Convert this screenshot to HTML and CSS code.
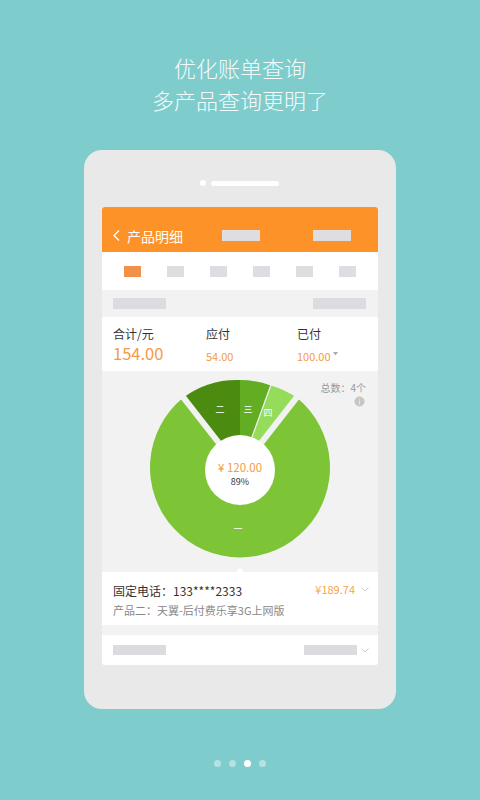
FILE: index.html
```html
<!DOCTYPE html>
<html lang="zh">
<head>
<meta charset="utf-8">
<link rel="stylesheet" href="styles.css">
</head>
<body>
<div class="page">
  <div class="title">
    <div>优化账单查询</div>
    <div>多产品查询更明了</div>
  </div>
  <div class="phone">
    <div class="speaker"><span class="cam"></span><span class="slot"></span></div>
    <div class="screen">
      <div class="header">
        <svg class="back" width="7" height="11" viewBox="0 0 7 11"><polyline points="6,0.5 1,5.5 6,10.5" fill="none" stroke="#fff" stroke-width="1.3"/></svg>
        <span class="htitle">产品明细</span>
        <span class="hbar hbar1"></span>
        <span class="hbar hbar2"></span>
      </div>
      <div class="tabs">
        <div class="tab"><span class="sq active"></span></div>
        <div class="tab"><span class="sq"></span></div>
        <div class="tab"><span class="sq"></span></div>
        <div class="tab"><span class="sq"></span></div>
        <div class="tab"><span class="sq"></span></div>
        <div class="tab"><span class="sq"></span></div>
      </div>
      <div class="grayrow">
        <span class="gbar"></span>
        <span class="gbar"></span>
      </div>
      <div class="totals">
        <div class="col">
          <div class="lbl">合计/元</div>
          <div class="val big">154.00</div>
        </div>
        <div class="col">
          <div class="lbl">应付</div>
          <div class="val">54.00</div>
        </div>
        <div class="col">
          <div class="lbl">已付</div>
          <div class="val">100.00<svg class="caret" width="5" height="4" viewBox="0 0 5 4"><polygon points="0,0 5,0 2.5,3.5" fill="#aaa"/></svg></div>
        </div>
      </div>
      <div class="chart">
        <svg class="pie" width="276" height="201" viewBox="0 0 276 201">
          <path d="M138,99 L194.64,26.5 A90,90 0 1 1 81.36,26.5 Z" fill="#7dc536"/>
          <path d="M138,99 L81.36,26.5 A90,90 0 0 1 138,9 Z" fill="#4b8c10"/>
          <path d="M138,99 L138,9 A90,90 0 0 1 168.78,14.43 Z" fill="#62ad22"/>
          <path d="M138,99 L168.78,14.43 A90,90 0 0 1 194.64,26.5 Z" fill="#95dc5b"/>
          <line x1="138" y1="99" x2="195.9" y2="24.9" stroke="#f2f2f2" stroke-width="6"/>
          <line x1="138" y1="99" x2="80.1" y2="24.9" stroke="#f2f2f2" stroke-width="6"/>
          <line x1="138" y1="99" x2="169.1" y2="13.5" stroke="#f2f2f2" stroke-width="1.2"/>
          <circle cx="138" cy="99" r="35" fill="#fff"/>
          <text x="118" y="42" class="seg">二</text>
          <text x="146" y="42" class="seg">三</text>
          <text x="166" y="45" class="seg">四</text>
          <text x="136" y="161" class="seg">一</text>
          <text x="138" y="101" class="amt" text-anchor="middle">¥ 120.00</text>
          <text x="138" y="114" class="pct" text-anchor="middle">89%</text>
          <polygon points="134.5,201 138,196.5 141.5,201" fill="#fff"/>
        </svg>
        <div class="count">总数：4个</div>
        <svg class="info" width="11" height="11" viewBox="0 0 11 11"><circle cx="5.5" cy="5.5" r="5" fill="#c6c6c6"/><rect x="5" y="4.5" width="1" height="4" fill="#e6e6e6"/><rect x="5" y="2.5" width="1" height="1" fill="#e6e6e6"/></svg>
      </div>
      <div class="detail">
        <div class="dline1">
          <span class="phone-no">固定电话：133****2333</span>
          <span class="price">¥189.74<svg class="chev" width="8" height="5" viewBox="0 0 8 5"><polyline points="0.5,0.5 4,4 7.5,0.5" fill="none" stroke="#ccc" stroke-width="1"/></svg></span>
        </div>
        <div class="dline2">产品二：天翼-后付费乐享3G上网版</div>
      </div>
      <div class="gap"></div>
      <div class="lastrow">
        <span class="gbar"></span>
        <span class="rgt"><span class="gbar"></span><svg class="chev" width="8" height="5" viewBox="0 0 8 5"><polyline points="0.5,0.5 4,4 7.5,0.5" fill="none" stroke="#ccc" stroke-width="1"/></svg></span>
      </div>
    </div>
  </div>
  <div class="dots">
    <span class="dot"></span><span class="dot"></span><span class="dot on"></span><span class="dot"></span>
  </div>
</div>
</body>
</html>
```
FILE: styles.css
```css
* { box-sizing: border-box; }
html, body { margin: 0; padding: 0; }
body {
  width: 480px;
  height: 800px;
  background: #7fcccd;
  font-family: "Noto Sans CJK SC", "Noto Sans", sans-serif;
  overflow: hidden;
}
.page { width: 480px; height: 800px; }
.title {
  padding-top: 51px;
  color: #f4fbfb;
  font-size: 22px;
  line-height: 32px;
  text-align: center;
  font-weight: 300;
}
.phone {
  width: 312px;
  height: 559px;
  margin: 35px auto 0;
  background: #e9e9e9;
  border-radius: 18px;
  padding: 0 18px;
}
.speaker {
  height: 57px;
  display: flex;
  align-items: center;
  justify-content: center;
  padding-top: 9px;
  padding-right: 2px;
}
.cam { width: 6px; height: 6px; border-radius: 50%; background: #fff; margin-right: 5px; }
.slot { width: 68px; height: 5px; border-radius: 3px; background: #fff; }
.screen {
  width: 276px;
  height: 458px;
  border-radius: 3px;
  overflow: hidden;
  background: #f2f2f2;
}
.header {
  height: 45px;
  background: #fc9228;
  display: flex;
  align-items: center;
  padding: 12px 0 0 11px;
}
.back { margin-right: 7px; }
.htitle { color: #fff; font-size: 14px; line-height: 18px; }
.hbar { height: 11px; width: 38px; background: #dedee2; }
.hbar1 { margin-left: 39px; }
.hbar2 { margin-left: 53px; }
.tabs {
  height: 38px;
  background: #fff;
  display: flex;
  align-items: center;
  padding: 0 9.5px;
}
.tab { flex: 1; display: flex; justify-content: center; }
.sq { width: 17px; height: 11px; background: #dedee2; }
.sq.active { background: #f2924a; }
.grayrow {
  height: 27px;
  display: flex;
  align-items: center;
  justify-content: space-between;
  padding: 0 12px 0 11px;
}
.gbar { display: block; width: 53px; height: 11px; background: #dcdce0; }
.totals {
  height: 54px;
  background: #fff;
  display: grid;
  grid-template-columns: 93px 91px 1fr;
  padding: 9px 0 0 11px;
}
.lbl { font-size: 12px; line-height: 15px; height: 15px; color: #333; }
.val { font-size: 11px; line-height: 18px; height: 20px; color: #f39c45; padding-top: 4px; margin-top: 2px; }
.val.big { font-size: 16.5px; line-height: 20px; padding-top: 0; }
.caret { margin-left: 2px; vertical-align: 5px; }
.chart { height: 201px; position: relative; }
.pie { display: block; }
.seg { font-size: 9px; fill: #fff; text-anchor: middle; }
.amt { font-size: 11.5px; fill: #f39c45; }
.pct { font-size: 9px; fill: #333; }
.count {
  position: absolute;
  top: 10px;
  right: 12px;
  font-size: 10px;
  line-height: 14px;
  color: #999;
}
.info { position: absolute; top: 25px; right: 13px; }
.detail {
  height: 53px;
  background: #fff;
  padding: 11px 9px 0 11px;
}
.dline1 { display: flex; justify-content: space-between; align-items: center; height: 16px; }
.phone-no { font-size: 12px; color: #333; line-height: 16px; }
.price { font-size: 11px; color: #f5a546; display: flex; align-items: center; margin-top: -4px; }
.price .chev { margin-left: 6px; }
.dline2 { font-size: 11px; line-height: 16px; color: #888; margin-top: 3px; }
.gap { height: 10px; }
.lastrow {
  height: 30px;
  background: #fff;
  display: flex;
  align-items: center;
  justify-content: space-between;
  padding: 0 9px 0 11px;
}
.lastrow .gbar { height: 10px; }
.rgt { display: flex; align-items: center; }
.rgt .chev { margin-left: 4px; }
.dots {
  display: flex;
  justify-content: center;
  gap: 8px;
  margin-top: 51px;
  padding-right: 0;
}
.dot { width: 7px; height: 7px; border-radius: 50%; background: #b4e2e3; }
.dot.on { background: #fff; }
```
